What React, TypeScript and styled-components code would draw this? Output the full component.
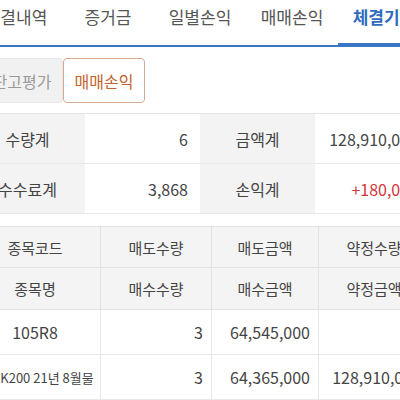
import React from "react";
import styled, { createGlobalStyle } from "styled-components";

const Global = createGlobalStyle`
  html, body { margin: 0; padding: 0; background: #fff; overflow: hidden; }
  body { font-family: "Noto Sans CJK KR", "Noto Sans", sans-serif; }
  * { box-sizing: border-box; }
`;

const Viewport = styled.div`
  width: 400px;
  height: 400px;
  overflow: hidden;
`;

const Page = styled.div`
  width: 470px;
  margin-left: -30px;
  display: flex;
  flex-direction: column;
`;

const TabBar = styled.div`
  display: flex;
  height: 47px;
  border-bottom: 2px solid #3b76c4;
`;

const Tab = styled.div<{ $active?: boolean }>`
  flex: 0 0 92px;
  height: 45px;
  line-height: 34px;
  text-align: center;
  font-size: 17px;
  white-space: nowrap;
  color: ${(p) => (p.$active ? "#2f6cbd" : "#555")};
  font-weight: ${(p) => (p.$active ? 700 : 400)};
  box-shadow: ${(p) => (p.$active ? "inset 0 -2px 0 #3b76c4" : "none")};
`;

const SubRow = styled.div`
  display: flex;
  padding: 11px 0 0 11px;
`;

const SubButton = styled.div<{ $active?: boolean }>`
  width: 82px;
  height: 45px;
  display: flex;
  align-items: center;
  justify-content: center;
  font-size: 16px;
  border-radius: 4px;
  white-space: nowrap;
  background: ${(p) => (p.$active ? "#fff" : "#f1f1f1")};
  color: ${(p) => (p.$active ? "#c4622c" : "#9a9a9a")};
  border: 1px solid ${(p) => (p.$active ? "#d6ab92" : "#e6e6e6")};
`;

const Summary = styled.div`
  margin-top: 10px;
  display: grid;
  grid-template-columns: 115px 115px 115px 115px;
  border-top: 1px solid #e4e4e4;
`;

const SumCell = styled.div<{ $label?: boolean; $red?: boolean }>`
  height: 50px;
  display: flex;
  align-items: center;
  justify-content: ${(p) => (p.$label ? "center" : "flex-end")};
  padding-right: ${(p) => (p.$label ? 0 : 12)}px;
  font-size: 16px;
  white-space: nowrap;
  background: ${(p) => (p.$label ? "#f3f3f3" : "#fff")};
  color: ${(p) => (p.$red ? "#d5333a" : "#444")};
  border-bottom: 1px solid #e8e8e8;
`;

const Detail = styled.div`
  margin-top: 12px;
  display: grid;
  grid-template-columns: 131px 111px 107px 111px;
  border-top: 1px solid #e2e2e2;
`;

const HeadCell = styled.div<{ $h: number }>`
  height: ${(p) => p.$h}px;
  display: flex;
  align-items: center;
  justify-content: center;
  font-size: 15px;
  color: #444;
  white-space: nowrap;
  background: #f4f4f4;
  border-right: 1px solid #e2e2e2;
  border-bottom: 1px solid #e2e2e2;
`;

const DataCell = styled.div<{ $center?: boolean; $small?: boolean }>`
  height: 45px;
  display: flex;
  align-items: center;
  justify-content: ${(p) => (p.$center ? "center" : "flex-end")};
  padding-right: ${(p) => (p.$center ? 0 : 8)}px;
  font-size: ${(p) => (p.$small ? 13 : 16)}px;
  color: #444;
  white-space: nowrap;
  background: #fff;
  border-right: 1px solid #e8e8e8;
  border-bottom: 1px solid #e8e8e8;
`;

const tabs = ["체결내역", "증거금", "일별손익", "매매손익", "체결기준"];

export default function App() {
  return (
    <Viewport>
      <Global />
      <Page>
        <TabBar>
          {tabs.map((t, i) => (
            <Tab key={t} $active={i === 4}>
              {t}
            </Tab>
          ))}
        </TabBar>
        <SubRow>
          <SubButton>잔고평가</SubButton>
          <SubButton $active>매매손익</SubButton>
        </SubRow>
        <Summary>
          <SumCell $label>수량계</SumCell>
          <SumCell>6</SumCell>
          <SumCell $label>금액계</SumCell>
          <SumCell>128,910,000</SumCell>
          <SumCell $label>수수료계</SumCell>
          <SumCell>3,868</SumCell>
          <SumCell $label>손익계</SumCell>
          <SumCell $red>+180,000</SumCell>
        </Summary>
        <Detail>
          <HeadCell $h={41}>종목코드</HeadCell>
          <HeadCell $h={41}>매도수량</HeadCell>
          <HeadCell $h={41}>매도금액</HeadCell>
          <HeadCell $h={41}>약정수량</HeadCell>
          <HeadCell $h={42}>종목명</HeadCell>
          <HeadCell $h={42}>매수수량</HeadCell>
          <HeadCell $h={42}>매수금액</HeadCell>
          <HeadCell $h={42}>약정금액</HeadCell>
          <DataCell $center>105R8</DataCell>
          <DataCell>3</DataCell>
          <DataCell>64,545,000</DataCell>
          <DataCell></DataCell>
          <DataCell $center $small>미니K200 21년 8월물</DataCell>
          <DataCell>3</DataCell>
          <DataCell>64,365,000</DataCell>
          <DataCell>128,910,000</DataCell>
        </Detail>
      </Page>
    </Viewport>
  );
}
